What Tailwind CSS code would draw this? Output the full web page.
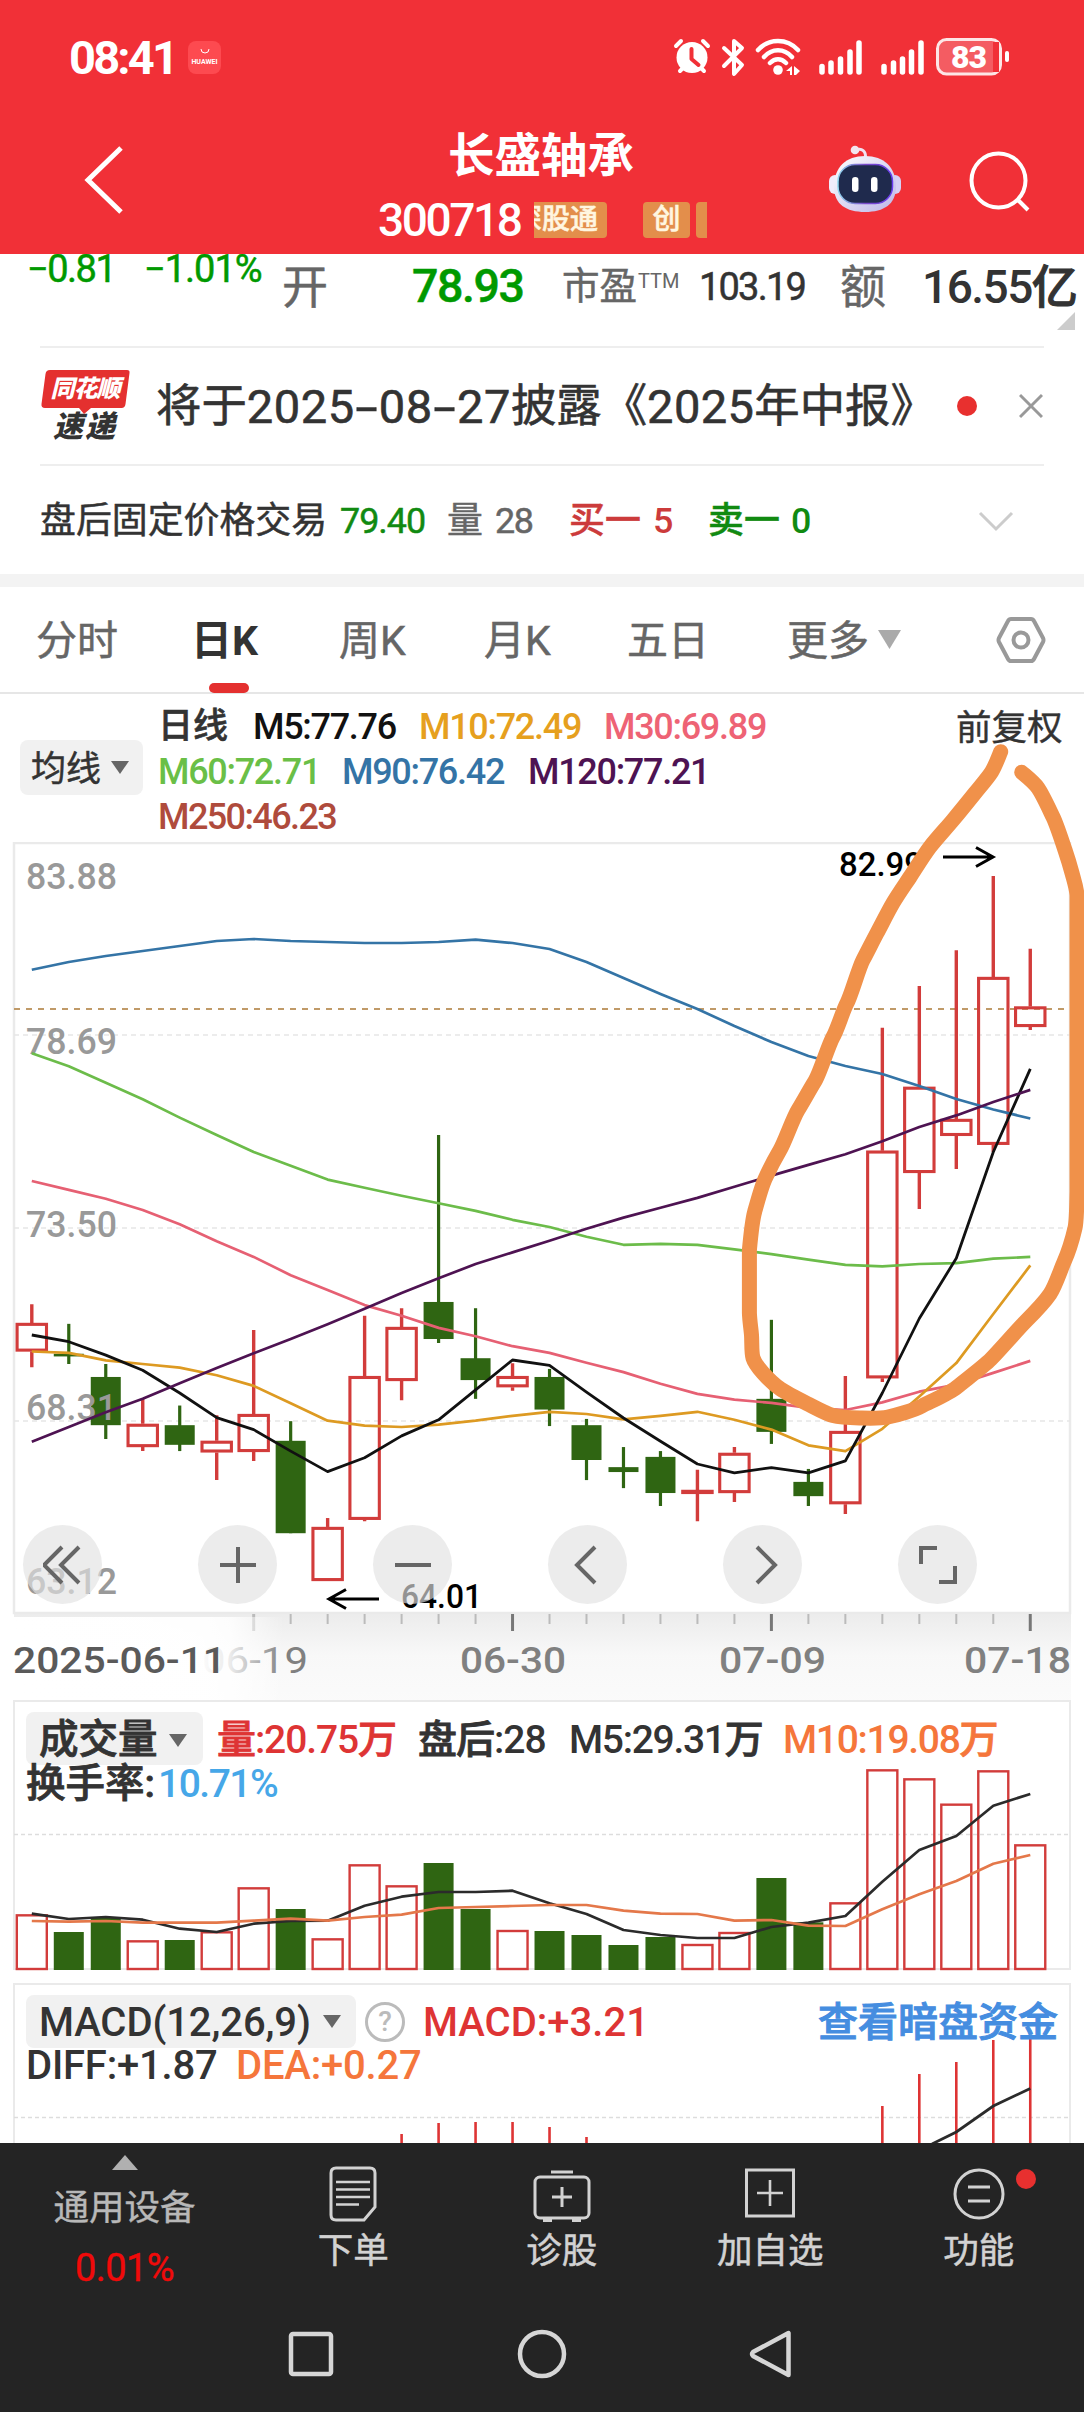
<!DOCTYPE html>
<html lang="zh-CN">
<head>
<meta charset="utf-8">
<title>长盛轴承 300718</title>
<script src="https://cdn.jsdelivr.net/npm/@tailwindcss/browser@4"></script>
</head>
<body class="w-[1084px] h-[2412px] overflow-hidden bg-white font-['Roboto','Noto_Sans_CJK_SC',sans-serif] text-[#333] whitespace-nowrap leading-none">
<div class="relative flex flex-col w-[1084px] h-[2412px]">

<!-- header -->
<header class="h-[254px] bg-[#f13037] text-white flex flex-col">
  <div class="h-[114px] flex items-center pl-[69px] pr-[74px]">
    <span class="w-[119px] text-[47px] font-bold tracking-[-2.8px]">08:41</span>
    <span class="w-[33px] h-[33px] rounded-lg bg-[#fd4a50] flex flex-col items-center justify-center gap-[5px]">
      <svg width="10" height="5" fill="none" stroke="#fff" stroke-width="1"><path d="M1 0a4 4 0 0 0 8 0"/></svg>
      <span class="text-[7px] font-bold leading-none">HUAWEI</span>
    </span>
    <svg class="ml-auto" width="340" height="40" viewBox="671 37 340 40" fill="none" stroke="#fff" stroke-linecap="round" stroke-linejoin="round">
      <circle cx="693" cy="57.500" r="15.500" fill="#fff" stroke="none"/>
      <path stroke-width="4" d="M677 46l5-5M704 41l5 5M681 71l4-4M705 71l-4-4"/>
      <path stroke="#f13037" stroke-width="4" d="M692.500 49v10l7 6"/>
      <path stroke-width="4" d="M725 48l18 17-8 9V41l8 7-18 18"/>
      <path stroke-width="4.500" d="M759 50c11-12 29-12 40 0M765 57c8-9 20-9 28 0M771 63c5-5 11-5 16 0"/>
      <circle cx="779" cy="70" r="4.800" fill="#fff" stroke="none"/>
      <path fill="#fff" stroke="none" d="M787 71l6-5v9h-2v-4zM795 66l6 5-4 4h-2z"/>
      <path stroke-width="5.500" d="M823 66.500v5.500M832 63v9M841.500 59v13M851 52v20M860 43v29M885 66.500v5.500M894.500 63v9M903.500 59v13M912.500 52v20M922 43v29"/>
      <rect x="938.500" y="39.500" width="63" height="34.500" rx="9" fill="#f45c62" stroke-width="3" stroke="#fde6e6"/>
      <rect x="994" y="42" width="6" height="30" fill="#f13037" stroke="none"/>
      <path stroke-width="4" d="M1008 53v7"/>
      <text x="970" y="68" font-size="32" font-weight="900" text-anchor="middle" textLength="36" fill="#fff" stroke="none">83</text>
    </svg>
  </div>
  <div class="h-[140px] flex items-start pl-[84px]">
    <svg class="mt-[32px]" width="42" height="70" fill="none" stroke="#fff" stroke-width="5"><path d="M37 2L4 34l33 32"/></svg>
    <div class="w-[328px] ml-[253px] flex flex-col">
      <h1 class="mt-[19px] pl-[69px] text-[46.500px] font-bold">长盛轴承</h1>
      <div class="flex items-center h-[38px] mt-[21px]">
        <span class="w-[156px] -ml-px text-[46px] font-medium tracking-[-2.400px]">300718</span>
        <div class="w-[173px] h-[36px] overflow-hidden flex text-[28px] font-medium text-[#fff6e0] [-webkit-text-stroke:.5px]">
          <span class="-ml-[29px] w-[102px] shrink-0 bg-[#e38e4b] rounded-[4px] flex items-center justify-center">深股通</span>
          <span class="ml-[36px] w-[47px] shrink-0 bg-[#e38e4b] rounded-[4px] flex items-center justify-center">创</span>
          <span class="ml-[6px] w-[47px] shrink-0 bg-[#e38e4b] rounded-[4px]"></span>
        </div>
      </div>
    </div>
    <svg class="ml-[120px] mt-[28px]" width="76" height="74" viewBox="827 142 76 74">
      <defs><linearGradient id="shell" x2="1" y2="1"><stop stop-color="#fff"/><stop offset="1" stop-color="#bdb6e8"/></linearGradient>
      <linearGradient id="rim" x2="1"><stop stop-color="#8fd6ee"/><stop offset=".5" stop-color="#7a49c8"/><stop offset="1" stop-color="#6a3df0"/></linearGradient></defs>
      <path d="M856 150c6-2 10 1 9.500 8" fill="none" stroke="#f1e3f2" stroke-width="3"/><circle cx="855" cy="150" r="4.300" fill="#f3e6f0"/>
      <rect x="829" y="175" width="12" height="19" rx="6" fill="#f0ecfb"/><rect x="889" y="175" width="12" height="19" rx="6" fill="#d6d0f5"/>
      <path d="M865 156c19 0 31 11 31 31 0 17-12 25-31 25s-31-8-31-25c0-20 12-31 31-31z" fill="url(#shell)"/>
      <rect x="838" y="164.500" width="54.500" height="39" rx="17" fill="#1f2a4d" stroke="url(#rim)" stroke-width="1.500"/>
      <rect x="852" y="177" width="6.500" height="15" rx="3.200" fill="#fff"/><rect x="871" y="177" width="6.500" height="15" rx="3.200" fill="#fff"/>
    </svg>
    <svg class="ml-[65px] mt-[36px]" width="64" height="64" fill="none" stroke="#fff" stroke-width="4"><circle cx="30.500" cy="30.500" r="27"/><path d="M50 50l10 10"/></svg>
  </div>
</header>

<!-- quote strip -->
<section class="h-[92px] relative overflow-hidden flex items-center pb-[27px] [-webkit-text-stroke:.5px]">
  <span class="w-[117px] pl-[27px] -mt-[36px] text-[38px] tracking-[-1.500px] text-[#090]">−0.81</span>
  <span class="w-[165px] pl-[27px] -mt-[36px] text-[38px] tracking-[-1px] text-[#090]">−1.01%</span>
  <span class="w-[130px] text-[46px] text-[#666]">开</span>
  <span class="w-[150px] text-[46.500px] font-medium tracking-[-1.400px] text-[#090]">78.93</span>
  <span class="w-[76px] text-[37.500px] text-[#666]">市盈</span>
  <span class="w-[61px] text-[20px] -mt-[12px] text-[#666] [-webkit-text-stroke:0]">TTM</span>
  <span class="w-[141px] text-[38px] tracking-[-1.800px]">103.19</span>
  <span class="w-[82px] text-[46px] text-[#666]">额</span>
  <span class="text-[46px] font-medium tracking-[-1.500px] [-webkit-text-stroke:0]">16.55<b class="font-medium tracking-normal [-webkit-text-stroke:1px]">亿</b></span>
  <svg class="absolute left-[1057px] top-[58px]" width="18" height="18"><path d="M18 0v18H0z" fill="#ccc"/></svg>
</section>

<!-- notice -->
<section class="mx-10 h-[120px] border-t-2 border-b-2 border-[#eee] flex items-center">
  <div class="w-[90px] flex flex-col items-center">
    <div class="relative w-[88px] h-[37px] flex items-center justify-center">
      <svg class="absolute left-0 top-0" width="90" height="44"><path d="M9 0h77q3 0 2.500 3l-4 31q-.5 4-4 4H50l-7 6-5-6H4q-4 0-3.500-4l4-30q.5-4 4.500-4z" fill="#e4302f"/></svg>
      <span class="relative text-[24px] font-black italic text-white tracking-[-1px]">同花顺</span>
    </div>
    <span class="mt-[5px] text-[30px] font-black italic tracking-[2px]">速递</span>
  </div>
  <p class="ml-[26px] pt-px w-[801px] flex items-center text-[45.400px] font-normal [-webkit-text-stroke:.6px]">将于<span class="text-[47px] flex tracking-[.6px]">2025<i class="not-italic w-[24px] text-center scale-x-170">-</i>08<i class="not-italic w-[24px] text-center scale-x-170">-</i>27</span>披露《<span class="text-[47px] tracking-[.4px]">2025</span>年中报》</p>
  <span class="w-5 h-5 rounded-full bg-[#e8302f]"></span>
  <svg class="ml-[42px] -mt-px" width="24" height="26" stroke="#999" stroke-width="3"><path d="M1 2l22 22M23 2L1 24"/></svg>
</section>

<!-- after-hours fixed price -->
<section class="h-[108px] pl-10 pt-[3px] flex items-center text-[35.900px] [-webkit-text-stroke:.5px]">
  <span class="w-[300px]">盘后固定价格交易</span>
  <span class="w-[107px] tracking-[-1px] text-[#118a11]">79.40</span>
  <span class="w-[48px] text-[#666]">量</span><span class="w-[74px] text-[#666] tracking-[-1.500px]">28</span>
  <span class="w-[84px] font-medium text-[#cc3b3b]">买一</span><span class="w-[55px] font-medium text-[#cc3b3b] [-webkit-text-stroke:0]">5</span>
  <span class="w-[83px] font-medium text-[#118a11]">卖一</span><span class="w-[187px] font-medium text-[#118a11] [-webkit-text-stroke:0]">0</span>
  <svg width="36" height="22" fill="none" stroke="#ccc" stroke-width="3"><path d="M2 2l16 16L34 2"/></svg>
</section>
<div class="h-[13px] bg-[#f3f3f3]"></div>

<!-- period tabs -->
<nav class="relative h-[107px] border-b-2 border-[#e6e6e6] flex items-center text-[41px] text-[#666]">
  <span class="w-[155px] pt-[3px] pl-[36px] [-webkit-text-stroke:.5px]">分时</span>
  <span class="w-[146px] pt-[3px] pl-[36px] font-bold text-[#333]">日K</span>
  <span class="w-[145px] pt-[3px] pl-[38px] [-webkit-text-stroke:.5px]">周K</span>
  <span class="w-[145px] pt-[3px] pl-[38px] [-webkit-text-stroke:.5px]">月K</span>
  <span class="w-[159px] pt-[3px] pl-[36px] [-webkit-text-stroke:.5px]">五日</span>
  <span class="w-[128px] pt-[3px] pl-[37px] [-webkit-text-stroke:.5px]">更多</span>
  <svg width="23" height="19"><path d="M0 0h23L11.500 19z" fill="#aaa"/></svg>
  <svg class="ml-[95px]" width="50" height="48" fill="none" stroke="#999" stroke-width="4"><path d="M15 3h20q2 0 3 2l9 17q1 2 0 4l-9 17q-1 2-3 2H15q-2 0-3-2L3 26q-1-2 0-4l9-17q1-2 3-2z"/><circle cx="25" cy="24" r="7.500"/></svg>
  <span class="absolute left-[209px] bottom-[-1px] w-10 h-[10px] rounded-[5px] bg-[#e4302f]"></span>
</nav>

<!-- moving average legend -->
<section class="h-[148px] pl-5 flex items-start">
  <div class="mt-[46px] pt-[3px] w-[123px] h-[55px] rounded-lg bg-[#f1f1f1] flex items-center gap-[10px] pl-[11px] text-[35px] [-webkit-text-stroke:.5px]">均线
    <svg class="-mt-[3px]" width="18" height="13"><path d="M0 0h18L9 13z" fill="#666"/></svg></div>
  <div class="ml-[15px] mt-[10px] w-[798px] text-[36px] font-medium tracking-[-1.300px]">
    <div class="h-[45px] flex items-center"><span class="w-[95px] tracking-normal text-[35px] [-webkit-text-stroke:.6px]">日线</span><span class="w-[166px] text-[#111]">M5:77.76</span><span class="w-[185px] text-[#e6a01e]">M10:72.49</span><span class="text-[#ee6375]">M30:69.89</span></div>
    <div class="h-[45px] flex items-center"><span class="w-[184px] text-[#6abf47]">M60:72.71</span><span class="w-[186px] text-[#3474a6]">M90:76.42</span><span class="text-[#4e1352]">M120:77.21</span></div>
    <div class="h-[45px] flex items-center text-[#af4b3c] tracking-[-1.600px]">M250:46.23</div>
  </div>
  <span class="mt-[17px] text-[35.500px] [-webkit-text-stroke:.4px]">前复权</span>
</section>

<!-- candles -->
<section class="relative h-[858px]">
  <svg id="candles" class="block" width="1084" height="858" viewBox="0 842 1084 858" fill="none"></svg>
  <div class="absolute left-[23px] top-[683px] w-[954px] flex justify-between">
    <span class="size-[79px] rounded-full bg-[#e2e2e2]/65 flex items-center justify-center"><svg width="40" height="40" fill="none" stroke="#666" stroke-width="4"><path d="M19 2L1 20l18 18M36 2L18 20l18 18"/></svg></span>
    <span class="size-[79px] rounded-full bg-[#e2e2e2]/65 flex items-center justify-center"><svg width="38" height="38" stroke="#666" stroke-width="4"><path d="M1 19h36M19 1v36"/></svg></span>
    <span class="size-[79px] rounded-full bg-[#e2e2e2]/65 flex items-center justify-center"><svg width="38" height="38" stroke="#666" stroke-width="4"><path d="M1 19h36"/></svg></span>
    <span class="size-[79px] rounded-full bg-[#e2e2e2]/65 flex items-center justify-center"><svg class="-ml-[6px]" width="24" height="40" fill="none" stroke="#666" stroke-width="4"><path d="M22 2L4 20l18 18"/></svg></span>
    <span class="size-[79px] rounded-full bg-[#e2e2e2]/65 flex items-center justify-center"><svg class="ml-[8px]" width="24" height="40" fill="none" stroke="#666" stroke-width="4"><path d="M2 2l18 18L2 38"/></svg></span>
    <span class="size-[79px] rounded-full bg-[#e2e2e2]/65 flex items-center justify-center"><svg width="40" height="40" fill="none" stroke="#666" stroke-width="4"><path d="M3 19V3h16M21 37h16V21"/></svg></span>
  </div>
</section>

<!-- volume -->
<section class="relative h-[283px]">
  <svg id="volume" class="absolute left-0 top-0" width="1084" height="283" viewBox="0 1700 1084 283" fill="none"></svg>
  <div class="relative pt-3 pl-[26px] text-[39px] font-medium">
    <div class="flex items-center h-[53px]">
      <span class="w-[177px] h-[53px] pt-[3px] rounded-lg bg-[#f1f1f1] flex items-center gap-[11px] pl-[13px] text-[39.500px] [-webkit-text-stroke:.8px]">成交量<svg width="18" height="13"><path d="M0 0h18L9 13z" fill="#666"/></svg></span>
      <span class="ml-[14px] pt-[3px] w-[201px] text-[#de3434] tracking-[-1.100px]"><span class="[-webkit-text-stroke:.8px]">量</span>:20.75<span class="[-webkit-text-stroke:.8px]">万</span></span>
      <span class="w-[151px] pt-[3px] tracking-[-1px]"><span class="[-webkit-text-stroke:.8px]">盘后</span>:28</span>
      <span class="w-[214px] pt-[3px] tracking-[-1.300px]">M5:29.31<span class="[-webkit-text-stroke:.8px]">万</span></span>
      <span class="pt-[3px] text-[#f5763b] tracking-[-1.300px]">M10:19.08<span class="[-webkit-text-stroke:.8px]">万</span></span>
    </div>
    <div class="h-[38px] flex items-center"><span class="w-[132px] text-[39.500px] [-webkit-text-stroke:.8px]">换手率:</span><span class="text-[#46a7e8] tracking-[-1.500px]">10.71%</span></div>
  </div>
</section>

<!-- macd -->
<section class="relative h-[160px]">
  <svg id="macd" class="absolute left-0 top-0" width="1084" height="160" viewBox="0 1983 1084 160" fill="none"></svg>
  <div class="relative pt-3 pl-[26px] text-[40px] font-medium">
    <div class="flex items-center h-[53px]">
      <span class="w-[330px] h-[53px] rounded-lg bg-[#f1f1f1] flex items-center pl-[13px]"><span class="w-[284px] pt-[2px] tracking-[-.1px]">MACD(12,26,9)</span><svg width="18" height="13"><path d="M0 0h18L9 13z" fill="#666"/></svg></span>
      <span class="ml-[9px] size-10 rounded-full border-3 border-[#bbb] text-[#bbb] text-[28px] flex items-center justify-center">?</span>
      <span class="ml-[18px] pt-[2px] w-[395px] text-[#de3434]">MACD:+3.21</span>
      <span class="pt-[3px] text-[#458de0] [-webkit-text-stroke:1px]">查看暗盘资金</span>
    </div>
    <div class="-mt-px h-[38px] flex items-center"><span class="w-[210px] tracking-[-.2px]">DIFF:+1.87</span><span class="text-[#f5763b] tracking-[-.2px]">DEA:+0.27</span></div>
  </div>
</section>

<!-- bottom bar -->
<footer class="h-[269px] bg-[#242424] text-[#d2d2d2] text-[35.500px]">
  <div class="h-[152px] flex">
    <div class="w-[249px] flex flex-col items-center pt-3">
      <svg width="26" height="15"><path d="M13 0l13 15H0z" fill="#b0b0b0"/></svg>
      <span class="mt-[21px] text-[#b8b8b8] [-webkit-text-stroke:.4px]">通用设备</span>
      <span class="mt-[22px] text-[38px] tracking-[-.6px] text-[#f00a0a] [-webkit-text-stroke:.4px]">0.01%</span>
    </div>
    <div class="w-[208.500px] flex flex-col items-center pt-[22px]"><svg width="56" height="58" viewBox="-4 0 56 58" fill="none" stroke="#d2d2d2" stroke-width="3"><path d="M7 3h34q5 0 5 5v34L35 55H7q-5 0-5-5V8q0-5 5-5z"/><path stroke-width="2.600" d="M7 17h34M7 24.500h34M7 32h34M7 39.500h23"/></svg><span class="mt-[11px] [-webkit-text-stroke:.5px]">下单</span></div>
    <div class="w-[208.500px] flex flex-col items-center pt-[22px]"><svg width="60" height="58" fill="none" stroke="#d2d2d2" stroke-width="3"><rect x="3" y="12" width="54" height="41" rx="5"/><path d="M19 7h22M30 22v20M20 32h20"/><path stroke-width="4" d="M11 55h9M40 55h9"/></svg><span class="mt-[11px] [-webkit-text-stroke:.5px]">诊股</span></div>
    <div class="w-[208.500px] flex flex-col items-center pt-[22px]"><svg width="60" height="58" fill="none" stroke="#d2d2d2" stroke-width="3"><rect x="6.500" y="5" width="47" height="46"/><path stroke-width="2.600" d="M30 15v26M17 28h26"/></svg><span class="mt-[11px] [-webkit-text-stroke:.5px]">加自选</span></div>
    <div class="relative w-[208.500px] flex flex-col items-center pt-[22px]"><svg width="60" height="58" fill="none" stroke="#d2d2d2" stroke-width="3"><circle cx="30" cy="29" r="24"/><path d="M19 22h22M19 36h22"/></svg><span class="mt-[11px] [-webkit-text-stroke:.5px]">功能</span><i class="absolute left-[141px] top-[26px] size-5 rounded-full bg-[#e8302f]"></i></div>
  </div>
  <div class="pl-[287px] flex items-start pt-[34px] gap-[185px]">
    <svg width="48" height="50" fill="none" stroke="#d6d6d6" stroke-width="4.500"><rect x="4" y="5" width="40" height="40" rx="2"/></svg>
    <svg class="overflow-visible" width="48" height="50" fill="none" stroke="#d6d6d6" stroke-width="4.500"><circle cx="22" cy="25" r="22"/></svg>
    <svg class="overflow-visible" width="48" height="50" fill="none" stroke="#d6d6d6" stroke-width="4.500" stroke-linejoin="round"><path d="M35.500 4v42L0 27q-2-2 0-4z"/></svg>
  </div>
</footer>

<!-- hand-drawn mark -->
<svg class="absolute left-0 top-0 pointer-events-none" width="1084" height="1450" fill="none" stroke="#f0914a" stroke-width="15" stroke-linecap="round" stroke-linejoin="round"><path id="mark"/></svg>
</div>

<script>
const X = i => 31.8 + 36.98 * i;
const Y = v => 960 + v / 2.24;
const line = (pts, color, f, w = 2.7) => `<polyline points="${pts.map((v, i) => X(i).toFixed(1) + ',' + f(v).toFixed(1)).join(' ')}" stroke="${color}" stroke-width="${w}" stroke-linejoin="round"/>`;
const label = (x, y, w, s, size, fill, weight = 500) => `<text x="${x}" y="${y}" font-size="${size}" font-weight="${weight}" fill="${fill}" textLength="${w}" lengthAdjust="spacingAndGlyphs">${s}</text>`;
const RED = '#d23c3b', GREEN = '#2f6512';

// direction, high, body top, body bottom, low
const K = [['r',771,813,877,912],['g',815,882,888,905],['g',905,934,1042,1073],['r',983,1039,1091,1100],['g',998,1042,1086,1100],['r',1020,1077,1103,1165],['r',829,1017,1102,1122],['g',1033,1077,1284,1284],['r',1250,1270,1391,1391],['r',797,932,1254,1257],['r',780,822,943,986],['g',392,766,849,858],['g',780,892,941,983],['r',903,932,957,965],['g',916,934,1007,1044],['g',1028,1042,1120,1165],['g',1091,1136,1147,1183],['g',1100,1113,1194,1223],['r',1142,1187,1196,1257],['r',1091,1104,1194,1214],['g',806,983,1057,1084],['g',1140,1169,1201,1223],['r',932,1055,1219,1241],['r',152,427,937,945],['r',58,284,477,558],['r',-22,356,394,468],['r',-188,38,414,430],['r',-25,104,150,157]];
let c = `<defs><linearGradient id="ax" x2="0" y2="1"><stop stop-color="#ececec"/><stop offset=".45" stop-color="#f8f8f8"/><stop offset="1" stop-color="#fbfbfb"/></linearGradient><linearGradient id="fade"><stop stop-color="#fff"/><stop offset=".7" stop-color="#fff" stop-opacity=".96"/><stop offset=".8" stop-color="#fff" stop-opacity=".85"/><stop offset="1" stop-color="#fff" stop-opacity="0"/></linearGradient></defs>`;
c += `<rect x="14" y="1614" width="1057" height="92" fill="url(#ax)"/><rect x="14" y="843" width="1056" height="770" stroke="#eaeaea" stroke-width="2.500"/>`;
for (const y of [1035, 1228, 1421]) c += `<path d="M14 ${y}h1056" stroke="#e6e6e6" stroke-width="1.500" stroke-dasharray="5 4"/>`;
c += `<path d="M14 1009h1056" stroke="#c09a68" stroke-width="1.800" stroke-dasharray="6 6"/>`;
K.forEach(([d, h, t, b, l], i) => {
  const x = X(i), col = d === 'r' ? RED : GREEN;
  if (d === 'g') c += `<path d="M${x} ${Y(h)}V${Y(l)}" stroke="${col}" stroke-width="3.200"/><rect x="${x - 15}" y="${Y(t)}" width="30" height="${Y(b) - Y(t)}" fill="${col}"/>`;
  else c += `<path d="M${x} ${Y(h)}V${Y(t)}M${x} ${Y(b)}V${Y(l)}" stroke="${col}" stroke-width="3.400"/><rect x="${x - 14.7}" y="${Y(t) + 1.4}" width="29.400" height="${Math.max(1, Y(b) - Y(t) - 2.8)}" stroke="${col}" stroke-width="3.100"/>`;
});
[['83.88', 889], ['78.69', 1054], ['73.50', 1236.5], ['68.31', 1420], ['63.12', 1594]].forEach(([s, y]) => c += label(26, y, 91, s, 37, '#999', 500));
c += line([969.7,962,956,951,946,941,939,941,942,943,943,942,939.7,943,949,962,978,994,1009,1026,1042,1056,1066,1074,1086,1099,1109.5,1118.5], '#3474a6', v => v);
c += line([209,238,275,312,353,392,430,461,492,510,528,545,562,582,598,620,638,636,638,648,659,671,683,686,681,679,669,665], '#6cbc4a', Y);
c += line([495,515,535,560,592,630,665,706,739,773,797,824,843,865,880,902,923,949,972,985,992,1003,1008,991,967,951,925,898], '#e66073', Y);
c += line([877,880,897,905,913,930,954,993,1032,1043,1046,1041,1032,1021,1012,1017,1029,1021,1012,1030,1052,1087,1100,1050,978,903,793,684], '#dd9a22', Y);
c += line([840,855,885,919,970,1025,1052,1100,1146,1115,1066,1030,963,896,908,968,1026,1078,1129,1149,1137,1149,1122,970,803,668,430,244], '#111', Y, 2.8);
c += line([1079,1046,1013,983,948,914,881,849,816,781,746,713,681,655,629,602,577,555,533,508,483,459,435,406,374,348,318,291], '#4e1352', Y);
c += label(839, 875.5, 84, '82.99', 33, '#000') + `<path d="M943 857h50M976 847.500l17 9.500-17 9.500" stroke="#000" stroke-width="3"/>`;
c += label(401, 1608, 81, '64.01', 33, '#000') + `<path d="M379 1599h-50M346 1589.500l-17 9.500 17 9.500" stroke="#000" stroke-width="3"/>`;
for (let i = 6; i < 28; i++) c += (i - 6) % 7 ? `<path d="M${X(i)} 1614v10" stroke="#bbb" stroke-width="2"/>` : `<path d="M${X(i)} 1614v17" stroke="${i === 6 ? '#bbb' : '#777'}" stroke-width="3"/>`;
c += label(202, 1673, 106, '06-19', 37, '#808080', 400) + `<rect x="14" y="1617" width="270" height="89" fill="url(#fade)"/>`;
c += label(13, 1673, 213, '2025-06-11', 37, '#5a5a5a', 500) + label(460, 1673, 106, '06-30', 37, '#808080', 500) + label(719, 1673, 107, '07-09', 37, '#808080', 500) + label(964, 1673, 107, '07-18', 37, '#808080', 500);
document.getElementById('candles').innerHTML = c;

const V = v => 1700 + v / 3;
const vol = [['r',643],['g',696],['g',652],['r',721],['g',720],['r',694],['r',562],['g',627],['r',715],['r',493],['r',556],['g',489],['g',627],['r',690],['g',693],['g',705],['g',735],['g',711],['r',732],['r',696],['g',534],['g',667],['r',607],['r',208],['r',235],['r',311],['r',211],['r',433]];
let v = `<rect x="14" y="1701" width="1056" height="268" fill="#fff" stroke="#eaeaea" stroke-width="2"/><path d="M14 1834.500h1056" stroke="#ddd" stroke-width="1.500" stroke-dasharray="4 3"/>`;
vol.forEach(([d, t], i) => {
  v += d === 'g' ? `<rect x="${X(i) - 15}" y="${V(t)}" width="30" height="${1970 - V(t)}" fill="${GREEN}"/>` : `<rect x="${X(i) - 15}" y="${V(t) + 1}" width="30" height="${1969 - V(t) - 1}" stroke="${RED}" stroke-width="2.400"/>`;
});
v += line([641,657,651,659,686,696,671,663,662,617,590,576,576,572,610,642,690,705,714,714,681,668,648,545,450,408,317,282], '#2b2b2b', V);
v += line([663,665,663,668,668,668,662,656,662,651,644,624,621,618,615,615,632,641,642,662,660,677,678,628,583,543,491,465], '#e4784a', V);
document.getElementById('volume').innerHTML = v;

let m = `<path d="M14 2143V1984h1056v159" stroke="#eaeaea" stroke-width="2"/><path d="M14 2117.500h1056" stroke="#ddd" stroke-width="1.500" stroke-dasharray="4 3"/>`;
[[10,2134],[11,2123],[12,2122],[13,2122],[14,2127],[15,2137],[23,2106],[24,2074],[25,2062],[26,2040],[27,2038]].forEach(([i, y]) => m += `<path d="M${X(i)} ${y}V2143" stroke="#de3434" stroke-width="2.600"/>`);
m += `<path d="M932 2144L${X(25)} 2132L${X(26)} 2106L${X(27)} 2088.500" stroke="#2b2b2b" stroke-width="2.800"/>`;
document.getElementById('macd').innerHTML = m;

// smooth freehand stroke passing through sampled points (Catmull-Rom)
const P = [[1000.7,751.7],[991.7,771.7],[975,793],[953,820],[930,847],[910,877],[893,903],[877,933],[863,960],[847,1003],[833,1037],[815,1081],[798,1110],[780,1150],[765,1179],[754.6,1212],[749.4,1250],[749.4,1313],[751.5,1335],[753,1358],[763,1373],[780.5,1389],[808,1404],[833,1415.5],[860,1418],[888,1417],[922,1406],[957,1387],[991,1359],[1026,1321],[1050,1294],[1064,1262],[1075,1228],[1077,1192],[1077,960],[1077,895],[1072,873],[1065,850],[1053,817],[1038,788],[1021.7,772.3]];
let d = `M${P[0]}`;
for (let i = 0; i < P.length - 1; i++) {
  const a = P[i - 1] || P[i], b = P[i], e = P[i + 1], f = P[i + 2] || e;
  const k = Math.hypot(e[0] - b[0], e[1] - b[1]) > 60 ? 0 : 7;
  const h = (u, w, s) => k ? Math.max(-8, Math.min(8, (w - u) / k)) * s : 0;
  d += `C${b[0] + h(a[0], e[0], 1)} ${b[1] + h(a[1], e[1], 1)} ${e[0] - h(b[0], f[0], 1)} ${e[1] - h(b[1], f[1], 1)} ${e}`;
}
document.getElementById('mark').setAttribute('d', d);
</script>
</body>
</html>
